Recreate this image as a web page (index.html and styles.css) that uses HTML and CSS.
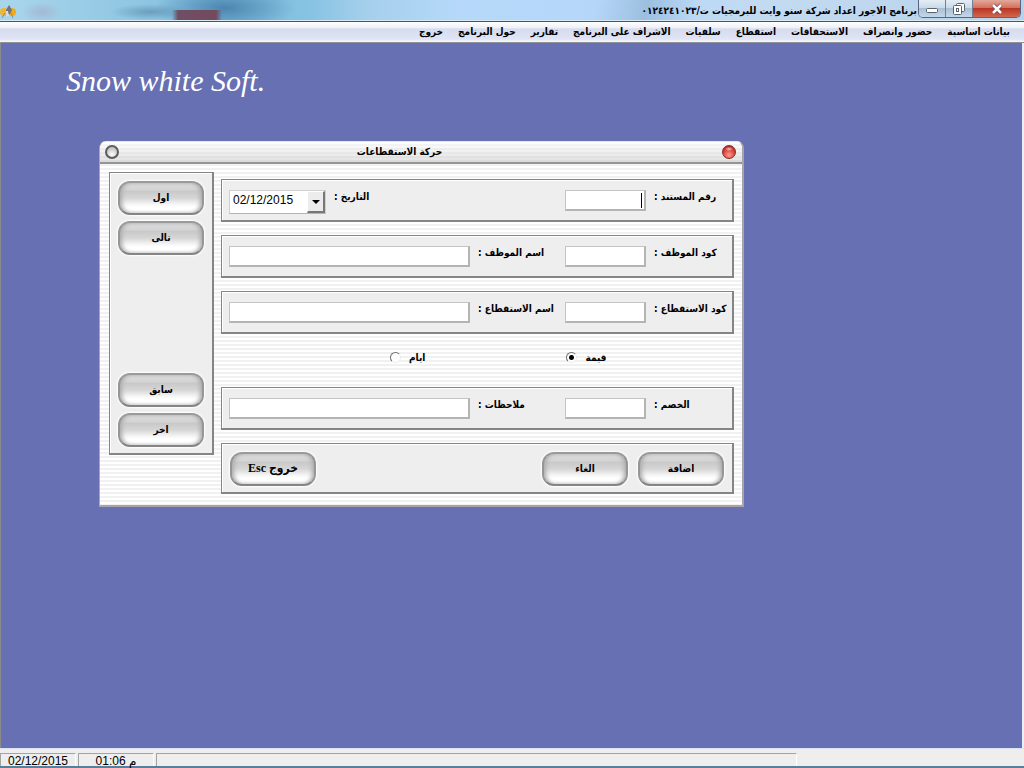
FILE: index.html
```html
<!DOCTYPE html>
<html lang="ar">
<head>
<meta charset="UTF-8" />
<meta name="viewport" content="width=device-width, initial-scale=1" />
<title>برنامج الاجور</title>
<link rel="stylesheet" href="styles.css">
</head>
<body>
<header class="titlebar">
  <svg class="app-icon" viewBox="0 0 16 16" aria-hidden="true">
    <ellipse cx="4" cy="8" rx="4" ry="4" fill="#f2b52c" />
    <ellipse cx="12" cy="8" rx="4" ry="4" fill="#f0ab22" />
    <path d="M9 1l3 5-2 4H6V6z" fill="#6f7480" />
    <path d="M5 9l-3 5M11 9l2 5" stroke="#8d8a80" stroke-width="1" />
    <path d="M6 7h2l1 5H6z" fill="#d7dde2" />
  </svg>
  <h1 class="app-title" dir="rtl">برنامج الاجور اعداد شركة سنو وايت للبرمجيات ت/٠١٢٤٢٤١٠٢٣</h1>
  <div class="window-buttons">
    <button class="win-btn" type="button" aria-label="تصغير">
      <svg width="14" height="12" viewBox="0 0 14 12"><rect x="1.500" y="5.500" width="11" height="4" rx="1" fill="#fff" stroke="#5a6270" /></svg>
    </button>
    <button class="win-btn" type="button" aria-label="استعادة">
      <svg width="14" height="14" viewBox="0 0 14 14"><rect x="4.500" y="1.500" width="8" height="8" rx="1" fill="#fff" stroke="#5a6270" /><rect x="1.500" y="3.500" width="8" height="9" rx="1" fill="#fff" stroke="#5a6270" /><rect x="4.500" y="6.500" width="2" height="3" fill="#fff" stroke="#5a6270" /></svg>
    </button>
    <button class="win-btn win-close" type="button" aria-label="اغلاق">
      <svg width="14" height="12" viewBox="0 0 14 12"><path d="M3 2l8 8M11 2l-8 8" stroke="#6a4444" stroke-width="4" /><path d="M3 2l8 8M11 2l-8 8" stroke="#fff" stroke-width="2.500" /></svg>
    </button>
  </div>
</header>

<nav class="menubar" dir="rtl">
  <a href="#">بيانات اساسية</a>
  <a href="#">حضور وانصراف</a>
  <a href="#">الاستحقاقات</a>
  <a href="#">استقطاع</a>
  <a href="#">سلفيات</a>
  <a href="#">الاشراف على البرنامج</a>
  <a href="#">تقارير</a>
  <a href="#">حول البرنامج</a>
  <a href="#">خروج</a>
</nav>

<main class="workspace">
  <p class="brand">Snow white Soft.</p>

  <section class="dialog" aria-labelledby="dialog-title">
    <div class="dialog-bar">
      <button class="orb" type="button" aria-label="تصغير"></button>
      <h2 id="dialog-title" dir="rtl">حركة الاستقطاعات</h2>
      <button class="orb orb-red" type="button" aria-label="اغلاق"></button>
    </div>

    <form class="dialog-body" onsubmit="event.preventDefault();">
      <div class="panel side">
        <button class="glossy" type="button">اول</button>
        <button class="glossy" type="button">تالى</button>
        <button class="glossy side-lower" type="button">سابق</button>
        <button class="glossy" type="button">اخر</button>
      </div>

      <div class="fields">
        <div class="panel row">
          <div class="date-box">
            <select id="doc-date">
              <option>02/12/2015</option>
            </select>
            <span class="date-arrow"></span>
          </div>
          <label for="doc-date" dir="rtl">التاريخ :</label>
          <div class="caret-box">
            <input class="short" type="text" id="doc-no" />
            <span class="caret"></span>
          </div>
          <label class="end-label" for="doc-no" dir="rtl">رقم المستند :</label>
        </div>

        <div class="panel row">
          <input class="long" type="text" id="emp-name" />
          <label for="emp-name" dir="rtl">اسم الموظف :</label>
          <input class="short" type="text" id="emp-code" />
          <label class="end-label" for="emp-code" dir="rtl">كود الموظف :</label>
        </div>

        <div class="panel row">
          <input class="long" type="text" id="ded-name" />
          <label for="ded-name" dir="rtl">اسم الاستقطاع :</label>
          <input class="short" type="text" id="ded-code" />
          <label class="end-label" for="ded-code" dir="rtl">كود الاستقطاع :</label>
        </div>

        <div class="kinds">
          <div class="kind">
            <input type="radio" name="kind" id="kind-days" />
            <label for="kind-days">ايام</label>
          </div>
          <div class="kind">
            <input type="radio" name="kind" id="kind-value" checked />
            <label for="kind-value">قيمة</label>
          </div>
        </div>

        <div class="panel row">
          <input class="long" type="text" id="notes" />
          <label for="notes" dir="rtl">ملاحظات :</label>
          <input class="short" type="text" id="discount" />
          <label class="end-label" for="discount" dir="rtl">الخصم :</label>
        </div>

        <div class="panel actions">
          <button class="glossy exit" type="button" dir="ltr">Esc خروج</button>
          <button class="glossy" type="button">الغاء</button>
          <button class="glossy" type="submit">اضافة</button>
        </div>
      </div>
    </form>
  </section>
</main>

<footer class="statusbar">
  <span class="cell">02/12/2015</span>
  <span class="cell">01:06 م</span>
  <span class="cell cell-wide"></span>
</footer>
</body>
</html>
```
FILE: styles.css
```css
* {
  box-sizing: border-box;
}
body {
  margin: 0;
  min-height: 100vh;
  display: flex;
  flex-direction: column;
  background: #6670b2;
  color: #000;
  font-family: "Liberation Sans", "DejaVu Sans", sans-serif;
  font-size: 10px;
}
button, input, select {
  font-family: inherit;
  font-size: inherit;
  margin: 0;
}

/* Title bar */
.titlebar {
  height: 22px;
  display: flex;
  align-items: flex-start;
  padding-right: 3px;
  border-bottom: 1px solid #3f5672;
  box-shadow: inset 0 -1px 0 #d8eaf6;
  background:
    linear-gradient(90deg, transparent, #6f4f66 12%, #74495c 88%, transparent) 172px 10px / 50px 11px no-repeat,
    radial-gradient(ellipse 70px 24px at 225px 8px, #4c86b0, transparent),
    radial-gradient(ellipse 40px 8px at 150px 12px, #6ba0bd, transparent),
    radial-gradient(ellipse 20px 10px at 42px 12px, #a3b9d2, transparent),
    linear-gradient(100deg, transparent 58%, #9cbfe0 63%, transparent 68%),
    linear-gradient(90deg, #a9d6ec 0, #7fbcdc 22%, #86c2e2 30%, #a5d0ec 36%, #b6d9fa 45%, #b5d6f8 60%, #c3dbf1 75%, #b7d2ea 100%);
}
.app-icon {
  width: 16px;
  height: 16px;
  margin-top: 4px;
}
.app-title {
  flex: 1;
  margin: 0 1px 0 0;
  font-family: "DejaVu Sans Condensed", "DejaVu Sans", sans-serif;
  font-size: 10px;
  font-weight: 600;
  line-height: 22px;
  white-space: nowrap;
}
.window-buttons {
  display: flex;
  height: 18px;
  border: 1px solid #56677d;
  border-top: 0;
  border-radius: 0 0 5px 5px;
  overflow: hidden;
}
.win-btn {
  width: 27px;
  padding: 0;
  display: flex;
  align-items: center;
  justify-content: center;
  border: 0;
  border-right: 1px solid #6f8298;
  background: linear-gradient(#e4edf5, #cbdbe9 45%, #a9bfd4 50%, #c3d8ea);
}
.win-close {
  width: 47px;
  border-right: 0;
  background: linear-gradient(#e3a899, #d3725f 45%, #bb3522 50%, #d0684e);
}

/* Menu */
.menubar {
  height: 21px;
  display: flex;
  gap: 15px;
  padding: 0 14px;
  border-bottom: 1px solid #8d8f99;
  background: linear-gradient(#fff, #edf0f8 30%, #d6dcee 34%, #e0e4f4 85%, #fafafa);
  font-family: "DejaVu Sans Condensed", "DejaVu Sans", sans-serif;
  font-weight: 700;
  line-height: 20px;
  white-space: nowrap;
}
.menubar a {
  color: #000;
  text-decoration: none;
}

/* Workspace */
.workspace {
  flex: 1;
  position: relative;
  border-left: 1px solid #8b8b8b;
  border-right: 2px solid #eceef6;
  background: #6670b2;
}
.brand {
  margin: 0;
  padding: 20px 65px;
  color: #fff;
  font-family: "Liberation Serif", serif;
  font-style: italic;
  font-size: 30px;
  line-height: 36px;
}

/* Dialog */
.dialog {
  position: absolute;
  left: 98px;
  top: 98px;
  width: 645px;
  border: 1px solid #a9a9b0;
  border-top-color: #e8e8ea;
  border-right: 2px solid #a4a4aa;
  border-bottom: 2px solid #a4a4aa;
  border-radius: 7px 7px 0 0;
  overflow: hidden;
  background: repeating-linear-gradient(#fff 0 2px, #f1f1f1 2px 4px);
  font-family: "DejaVu Sans Condensed", "DejaVu Sans", sans-serif;
  font-weight: 700;
}
.dialog-bar {
  height: 22px;
  display: flex;
  align-items: center;
  justify-content: space-between;
  padding: 0 6px 0 5px;
  border-bottom: 2px solid #949494;
  background:
    linear-gradient(rgb(255 255 255 / 0.6), rgb(205 205 205 / 0.6)),
    repeating-linear-gradient(#fff 0 2px, #ececec 2px 4px);
}
.dialog-bar h2 {
  margin: 0 0 0 -42px;
  font-size: 10px;
  line-height: 18px;
}
.orb {
  width: 14px;
  height: 14px;
  padding: 0;
  border: 2px solid #5c5c5c;
  border-radius: 50%;
  background: radial-gradient(circle at 50% 75%, #fff, #c4c4c4 70%);
}
.orb-red {
  border: 1px solid #7b2a28;
  background:
    radial-gradient(ellipse 4px 2px at 50% 25%, #f6c9c2, transparent),
    radial-gradient(circle at 50% 75%, #ff9a85, #d23a35 60%, #9d2724);
}
.dialog-body {
  display: flex;
  align-items: flex-start;
  gap: 7px;
  padding: 8px 8px 11px 9px;
}
.panel {
  border: 1px solid #858585;
  border-right-width: 2px;
  border-bottom-width: 2px;
  box-shadow: inset 1px 1px 0 #fff;
  background: #efeeee;
}
.side {
  flex: none;
  width: 105px;
  min-height: 283px;
  display: flex;
  flex-direction: column;
  align-items: center;
  gap: 6px;
  padding: 8px 0 6px;
}
.side-lower {
  margin-top: auto;
}
.fields {
  flex: 1;
  min-width: 0;
  display: flex;
  flex-direction: column;
  gap: 13px;
  padding-top: 7px;
}
.row {
  display: flex;
  align-items: flex-start;
  gap: 8px;
  height: 43px;
  padding: 10px 0 0 7px;
}
.row label {
  flex: 1;
  text-align: left;
  line-height: 14px;
  white-space: nowrap;
}
.row .end-label {
  flex: 0 0 78px;
}
.row input {
  flex: none;
  height: 21px;
  padding: 1px 4px;
  border: 1px solid #c4c4c4;
  border-right: 2px solid #b4b4b4;
  border-bottom: 2px solid #b4b4b4;
  background: #fff;
  direction: rtl;
}
.long {
  width: 241px;
}
.short {
  width: 81px;
}

/* Date drop-down */
.date-box {
  position: relative;
  width: 97px;
  height: 24px;
  display: flex;
}
.date-box select {
  appearance: none;
  width: 100%;
  padding: 0 20px 4px 3px;
  border: 1px solid #d0d0d0;
  border-bottom-color: #b4b4b4;
  border-radius: 0;
  background: #fff;
  color: #000;
  font-family: "Liberation Sans", sans-serif;
  font-size: 12px;
}
.date-arrow {
  position: absolute;
  top: 1px;
  right: 1px;
  bottom: 1px;
  width: 18px;
  display: flex;
  align-items: center;
  justify-content: center;
  border: 1px solid #fff;
  border-right: 2px solid #777;
  border-bottom: 2px solid #777;
  background: #ececec;
  pointer-events: none;
}
.date-arrow::before {
  content: "";
  border: 4px solid transparent;
  border-top-color: #000;
  border-bottom: 0;
}

/* Text cursor in the document number box */
.caret-box {
  position: relative;
  display: flex;
}
.caret {
  position: absolute;
  top: 3px;
  right: 4px;
  width: 1px;
  height: 15px;
  background: #000;
}

/* Value / days */
.kinds {
  height: 27px;
  display: flex;
  gap: 141px;
  padding-left: 169px;
}
.kind {
  display: flex;
  align-items: center;
  gap: 8px;
  height: 20px;
}
.kind input {
  appearance: none;
  width: 11px;
  height: 11px;
  border: 1px solid;
  border-color: #6c6c6c #eee #eee #6c6c6c;
  border-radius: 50%;
  background: #fff;
}
.kind input:checked {
  background: radial-gradient(circle, #000 2px, #fff 3px);
}

/* Glossy buttons */
.glossy {
  width: 86px;
  height: 34px;
  padding: 0 0 2px;
  border: 2px solid #858585;
  border-top-color: #9a9a9a;
  border-left-color: #969696;
  border-right-color: #969696;
  border-radius: 12px;
  background: linear-gradient(#dedede, #d4d4d4 22%, #c9c9c9 28%, #d6d6d6 50%, #f4f4f4 70%, #fff 80%);
  box-shadow: inset 3px 0 4px -1px #aaa, inset -3px 0 4px -1px #aaa, 0 0 2px 1px #fff;
  font-weight: 700;
  color: #000;
}
.actions {
  display: flex;
  align-items: flex-start;
  gap: 10px;
  height: 51px;
  padding: 8px 8px 0;
}
.exit {
  margin-right: auto;
  font-family: "Liberation Serif", "DejaVu Sans Condensed", serif;
  font-size: 12px;
}

/* Status bar */
.statusbar {
  height: 20px;
  display: flex;
  gap: 2px;
  padding-top: 4px;
  border-top: 1px solid #dfe2f2;
  border-bottom: 2px solid #5a7d99;
  background: #efeeee;
  font-size: 12px;
  line-height: 14px;
}
.cell {
  width: 76px;
  border: 1px solid #a3a3a3;
  border-right-color: #fff;
  border-bottom: 0;
  text-align: center;
  white-space: nowrap;
}
.cell-wide {
  width: 641px;
}
```
